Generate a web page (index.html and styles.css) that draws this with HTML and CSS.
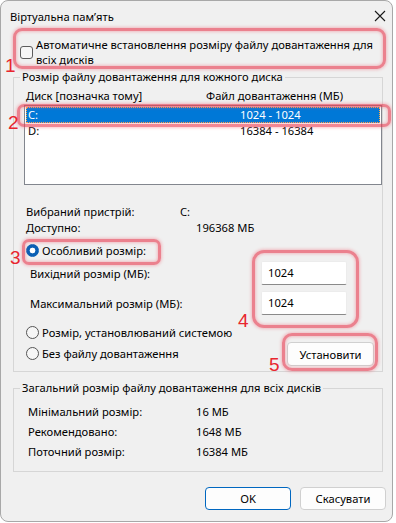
FILE: index.html
```
<!DOCTYPE html>
<html lang="uk">
<head>
    <meta charset="UTF-8">
    <title>Віртуальна пам’ять</title>
    <link rel="stylesheet" href="styles.css">
</head>
<body>
    <div class="window">
        <div class="titlebar">
            <span class="title">Віртуальна пам’ять</span>
            <svg class="close" width="12" height="12" viewBox="0 0 12 12">
                <path d="M1 1 L11 11 M11 1 L1 11" stroke="#1a1a1a" stroke-width="1.1" fill="none"/>
            </svg>
        </div>

        <div class="content">
            <label class="auto-row">
                <span class="checkbox"></span>
                <span class="auto-text">Автоматичне встановлення розміру файлу довантаження для<br>всіх дисків</span>
            </label>

            <fieldset class="group">
                <legend>Розмір файлу довантаження для кожного диска</legend>
                <div class="group-body drives">
                    <div class="cols">
                        <span>Диск [позначка тому]</span>
                        <span>Файл довантаження (МБ)</span>
                    </div>
                    <div class="listbox">
                        <div class="list-row selected"><span>C:</span><span>1024 - 1024</span></div>
                        <div class="list-row"><span>D:</span><span>16384 - 16384</span></div>
                    </div>

                    <div class="info">
                        <span>Вибраний пристрій:</span><span>C:</span>
                        <span>Доступно:</span><span class="shift">196368 МБ</span>
                    </div>

                    <div class="radio-row custom">
                        <span class="radio checked"></span>
                        <span>Особливий розмір:</span>
                    </div>

                    <div class="size-grid">
                        <span class="size-label">Вихідний розмір (МБ):</span>
                        <div class="edit">1024</div>
                        <span class="size-label">Максимальний розмір (МБ):</span>
                        <div class="edit">1024</div>
                    </div>

                    <div class="bottom-block">
                        <div class="radios">
                            <div class="radio-row"><span class="radio"></span><span>Розмір, установлюваний системою</span></div>
                            <div class="radio-row"><span class="radio"></span><span>Без файлу довантаження</span></div>
                        </div>
                        <button class="btn btn-set">Установити</button>
                    </div>
                </div>
            </fieldset>

            <fieldset class="group group-total">
                <legend>Загальний розмір файлу довантаження для всіх дисків</legend>
                <div class="group-body totals">
                    <span>Мінімальний розмір:</span><span>16 МБ</span>
                    <span>Рекомендовано:</span><span>1648 МБ</span>
                    <span>Поточний розмір:</span><span>16384 МБ</span>
                </div>
            </fieldset>

            <div class="footer">
                <button class="btn btn-default">OK</button>
                <button class="btn">Скасувати</button>
            </div>
        </div>

        <!-- annotations -->
        <div class="mark mark-1"></div>
        <div class="mark mark-2"></div>
        <div class="mark mark-3"></div>
        <div class="mark mark-4"></div>
        <div class="mark mark-5"></div>
        <span class="num num-1">1</span>
        <span class="num num-2">2</span>
        <span class="num num-3">3</span>
        <span class="num num-4">4</span>
        <span class="num num-5">5</span>
    </div>
</body>
</html>
```

FILE: styles.css
```
* {
    box-sizing: border-box;
    margin: 0;
    padding: 0;
}

body {
    font-family: "Noto Sans", "Liberation Sans", sans-serif;
    font-size: 11.2px;
    color: #000;
    background: #ffffff;
}

.window {
    position: relative;
    width: 393px;
    height: 522px;
    background: #f0f0f0;
    border: 1px solid #a8a8a8;
    border-radius: 8px;
    overflow: hidden;
    white-space: nowrap;
}

.titlebar {
    height: 30px;
    display: flex;
    align-items: center;
    justify-content: space-between;
    padding: 0 6px 0 9px;
}

.title {
    line-height: 15px;
}

.close {
    display: block;
}

.content {
    padding: 0 9px 0 12px;
}

.auto-row {
    display: flex;
    align-items: center;
    gap: 3px;
    margin-top: 6px;
    padding-left: 7px;
    line-height: 15px;
}

.checkbox {
    width: 13px;
    height: 13px;
    border: 1px solid #5c5c5c;
    border-radius: 3px;
    background: #f6f6f6;
    flex: none;
}

/* group boxes */
.group {
    border: 1px solid #d6d6d6;
    padding: 0;
    margin: 2px 0 0;
    min-width: 0;
}

.group legend {
    margin-left: 6px;
    padding: 0 2px;
    line-height: 16px;
}

.group-body.drives {
    padding: 0 0 5px 10px;
}

.cols {
    display: grid;
    grid-template-columns: 180px 1fr;
    margin-top: 3px;
    padding-left: 2px;
    line-height: 15px;
}

.listbox {
    margin-top: 2px;
    width: 358px;
    height: 80px;
    background: #fff;
    border: 1px solid #82868e;
    padding: 1px;
}

.list-row {
    display: grid;
    grid-template-columns: 212px 1fr;
    height: 16px;
    line-height: 16px;
    padding-left: 2px;
}

.list-row.selected {
    background: #0078d7;
    color: #fff;
    outline: 1px dotted #ffa943;
    outline-offset: -1px;
}

.info {
    display: grid;
    grid-template-columns: 154px 1fr;
    margin-top: 19px;
    padding-left: 2px;
    line-height: 16px;
}

.info .shift {
    padding-left: 16px;
}

.radio-row {
    display: flex;
    align-items: center;
    gap: 3px;
    height: 21px;
    padding-left: 2px;
}

.radio-row.custom {
    margin-top: 7px;
    height: 15px;
}

.radio {
    width: 13px;
    height: 13px;
    border: 1px solid #555;
    border-radius: 50%;
    background: #f6f6f6;
    flex: none;
}

.radio.checked {
    border-color: #0a5fb4;
    background: radial-gradient(circle, #ffffff 0 2.6px, #0a5fb4 3.2px);
}

.size-grid {
    display: grid;
    grid-template-columns: 237px 86px;
    grid-auto-rows: 30px;
    align-items: center;
}

.size-label {
    padding-left: 6px;
}

.edit {
    height: 24px;
    background: #fff;
    border: 1px solid #ececec;
    border-bottom-color: #8a8a8a;
    border-radius: 2px;
    padding-left: 6px;
    line-height: 22px;
}

.bottom-block {
    display: flex;
    justify-content: space-between;
    margin-top: 4px;
    padding-right: 8px;
}

.btn {
    font-family: inherit;
    font-size: 11.2px;
    color: #000;
    background: #fdfdfd;
    border: 1px solid #d0d0d0;
    border-radius: 4px;
    height: 23px;
    width: 86px;
}

.btn-set {
    margin-top: 20px;
    width: 87px;
    height: 24px;
}

.btn-default {
    border-color: #0067c0;
}

.group-total {
    margin-top: 8px;
}

.group-body.totals {
    display: grid;
    grid-template-columns: 168px 1fr;
    grid-auto-rows: 20px;
    align-items: center;
    padding: 5px 0 10px 14px;
}

.footer {
    display: flex;
    justify-content: flex-end;
    gap: 9px;
    margin-top: 15px;
    margin-right: -3px;
}

/* red annotations drawn over the dialog */
.mark {
    position: absolute;
    border: 3px solid rgba(232, 62, 82, 0.62);
    border-radius: 9px;
    box-shadow: 0 0 3px 1px rgba(240, 110, 125, 0.4), inset 0 0 3px 1px rgba(240, 110, 125, 0.4);
}

.mark-1 { left: 12px; top: 27px; width: 373px; height: 41px; }
.mark-2 { left: 16px; top: 103px; width: 374px; height: 23px; border-radius: 7px; }
.mark-3 { left: 21px; top: 238px; width: 139px; height: 26px; border-radius: 7px; }
.mark-4 { left: 251px; top: 249px; width: 107px; height: 78px; border-radius: 12px; }
.mark-5 { left: 281px; top: 332px; width: 96px; height: 38px; border-radius: 10px; }

.num {
    position: absolute;
    font-family: "Liberation Sans", sans-serif;
    font-size: 19px;
    line-height: 19px;
    color: #e8262e;
}

.num-1 { left: 4px; top: 55px; }
.num-2 { left: 7px; top: 112px; }
.num-3 { left: 9px; top: 247px; }
.num-4 { left: 237px; top: 310px; }
.num-5 { left: 268px; top: 354px; }
```
